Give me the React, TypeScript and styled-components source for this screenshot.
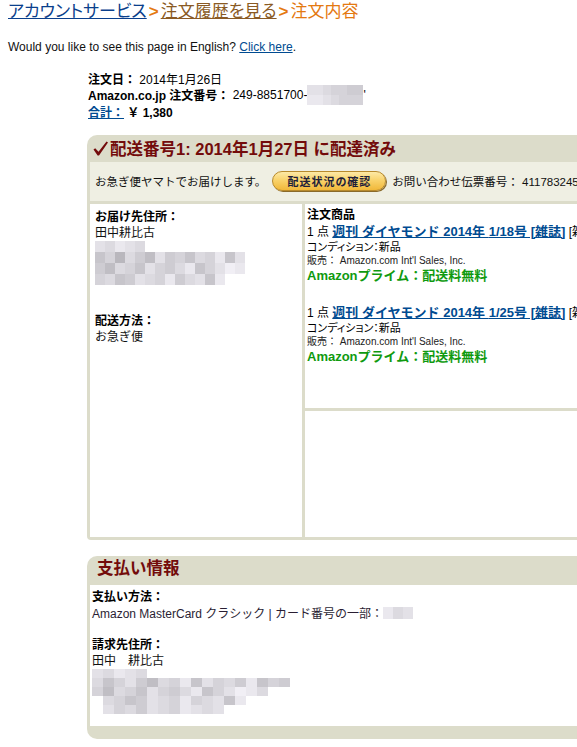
import React from "react";
import styled, { createGlobalStyle } from "styled-components";

const FONT = `"Liberation Sans", Arial, "Noto Sans CJK JP", sans-serif`;
const TAN = "#dcdcca";
const TAN_LIGHT = "#efefe3";
const MAROON = "#730b0b";
const LINK = "#004b91";

const GlobalStyle = createGlobalStyle`
  html, body { margin: 0; padding: 0; overflow: hidden; background: #fff; }
  body {
    font-family: ${FONT};
    font-size: 12px;
    color: #000;
  }
`;

const Page = styled.div`
  padding: 2px 8px 0;
  width: 760px;
`;

const Breadcrumb = styled.div`
  font-size: 17px;
  line-height: 20px;
  white-space: nowrap;
  font-feature-settings: "palt";
`;

const CrumbLink = styled.a<{ $tone: "blue" | "brown" }>`
  color: ${(p) => (p.$tone === "blue" ? "#0a3f8c" : "#8a5a24")};
  text-decoration: underline;
`;

const Sep = styled.span`
  color: #e47911;
  font-weight: bold;
  margin: 0 2px;
`;

const Current = styled.span`
  color: #e47911;
`;

const EnglishNote = styled.div`
  margin-top: 18px;
  line-height: 14px;
  color: #111;
`;

const TextLink = styled.a<{ $bold?: boolean; $size?: number }>`
  color: ${LINK};
  text-decoration: underline;
  font-weight: ${(p) => (p.$bold ? "bold" : "normal")};
  font-size: ${(p) => (p.$size ? `${p.$size}px` : "inherit")};
`;

const Summary = styled.div`
  margin: 16px 0 0 80px;
`;

const SummaryLine = styled.div`
  height: 16.5px;
  white-space: nowrap;
  display: flex;
  align-items: center;
`;

const Label = styled.b`
  font-weight: bold;
`;

const Box = styled.section`
  margin: 15px 0 0 79px;
  width: 680px;
  background: ${TAN};
  border-radius: 10px 0 0 4px;
  padding: 0 0 3px 3px;
`;

const BoxHeader = styled.h2`
  margin: 0;
  height: 27px;
  display: flex;
  align-items: center;
  gap: 1px;
  padding-left: 2px;
  color: ${MAROON};
  font-size: 16.5px;
  font-weight: bold;
  white-space: nowrap;
`;

const SubRow = styled.div`
  height: 39px;
  background: ${TAN_LIGHT};
  display: flex;
  align-items: center;
  padding-left: 5px;
  white-space: nowrap;
  color: #111;
  font-size: 11.5px;
`;

const TrackButton = styled.button`
  margin: 0 6px 0 6px;
  height: 20px;
  width: 114px;
  border-radius: 10px;
  border: 1px solid #b88a2c;
  box-shadow: 1px 1px 0 #8a6a2a;
  background: linear-gradient(#fde9a6 0%, #f9d36c 45%, #f1b83a 100%);
  font-family: ${FONT};
  font-feature-settings: "palt";
  font-size: 11px;
  font-weight: bold;
  color: #1f1f3a;
  letter-spacing: 1px;
  padding: 0;
  cursor: pointer;
`;

const ContentGrid = styled.div`
  margin-top: 3px;
  display: grid;
  grid-template-columns: 212px 1fr;
  grid-template-rows: 204px 126px;
  gap: 3px;
`;

const Cell = styled.div<{ $span?: boolean }>`
  background: #fff;
  grid-row: ${(p) => (p.$span ? "1 / span 2" : "auto")};
  padding: ${(p) => (p.$span ? "5px 5px" : "3px 2px")};
`;

const FieldLabel = styled.div<{ $gap?: number }>`
  font-weight: bold;
  line-height: 16px;
  margin-top: ${(p) => p.$gap ?? 0}px;
`;

const FieldText = styled.div`
  line-height: 16px;
  white-space: nowrap;
  color: #111;
`;

const Item = styled.div`
  & + & {
    margin-top: 19px;
  }
`;

const ItemLine = styled.div`
  line-height: 17px;
  height: 17px;
  white-space: nowrap;
`;

const Condition = styled.div`
  font-size: 11px;
  line-height: 15px;
  white-space: nowrap;
  font-feature-settings: "palt";
`;

const Seller = styled.div`
  font-size: 10px;
  line-height: 12px;
  white-space: nowrap;
  color: #222;
`;

const Prime = styled.div`
  font-size: 13px;
  line-height: 18px;
  font-weight: bold;
  color: #0f9a0f;
  white-space: nowrap;
`;

const PayBox = styled.section`
  margin: 16px 0 0 79px;
  width: 680px;
  background: ${TAN};
  border-radius: 10px 0 0 10px;
  padding: 0 0 13px 3px;
`;

const PayHeader = styled.h2`
  margin: 0;
  height: 29px;
  box-sizing: border-box;
  padding: 2px 0 0 7px;
  line-height: 20px;
  color: ${MAROON};
  font-size: 16.5px;
  font-weight: bold;
`;

const PayBody = styled.div`
  background: #fff;
  height: 141px;
  box-sizing: border-box;
  padding: 4px 2px;
`;

const CardText = styled.div`
  height: 16px;
  white-space: nowrap;
  color: #2a1e33;
  display: flex;
  align-items: center;
`;

const MosaicWrap = styled.div<{ $inline?: boolean }>`
  display: ${(p) => (p.$inline ? "inline-flex" : "flex")};
  flex-direction: column;
  vertical-align: middle;
`;

const MosaicRow = styled.div`
  display: flex;
`;

const MosaicCell = styled.span<{ $w: number; $h: number }>`
  display: block;
  width: ${(p) => p.$w}px;
  height: ${(p) => p.$h}px;
`;

function Mosaic({
  rows,
  w,
  h,
  inline,
}: {
  rows: string[];
  w: number;
  h: number;
  inline?: boolean;
}) {
  return (
    <MosaicWrap $inline={inline}>
      {rows.map((r, i) => (
        <MosaicRow key={i}>
          {r.split("").map((c, j) => {
            if (c === " ") return <MosaicCell key={j} $w={w} $h={h} />;
            const v = 0x88 + parseInt(c, 16) * 7;
            const tint = Math.min(255, v + 4);
            return (
              <MosaicCell
                key={j}
                $w={w}
                $h={h}
                style={{ background: `rgb(${v},${v - 2},${tint})` }}
              />
            );
          })}
        </MosaicRow>
      ))}
    </MosaicWrap>
  );
}

const Check = () => (
  <svg width="17" height="17" viewBox="0 0 17 17" aria-hidden="true">
    <path
      d="M1.5 9.5 L3.2 8.2 L6.5 11.8 L14.5 1.5 L16 2.5 L7 15.5 L5.6 15.5 Z"
      fill={MAROON}
    />
  </svg>
);

const items = [{ issue: "1/18号" }, { issue: "1/25号" }];

export default function App() {
  return (
    <>
      <GlobalStyle />
      <Page>
        <Breadcrumb>
          <CrumbLink $tone="blue" href="#">アカウントサービス</CrumbLink>
          <Sep>&gt;</Sep>
          <CrumbLink $tone="brown" href="#">注文履歴を見る</CrumbLink>
          <Sep>&gt;</Sep>
          <Current>注文内容</Current>
        </Breadcrumb>

        <EnglishNote>
          Would you like to see this page in English? <TextLink href="#">Click here</TextLink>.
        </EnglishNote>

        <Summary>
          <SummaryLine>
            <Label>注文日：</Label>&nbsp;2014年1月26日
          </SummaryLine>
          <SummaryLine>
            <Label>Amazon.co.jp 注文番号：</Label>&nbsp;249-8851700-
            <Mosaic inline w={8} h={10} rows={["ddcbbaa", "eedcbbb"]} />
            <span>'</span>
          </SummaryLine>
          <SummaryLine>
            <TextLink $bold href="#">合計：</TextLink>
            <Label>&nbsp;￥ 1,380</Label>
          </SummaryLine>
        </Summary>

        <Box>
          <BoxHeader>
            <Check />
            配送番号1: 2014年1月27日 に配達済み
          </BoxHeader>
          <SubRow>
            お急ぎ便ヤマトでお届けします。
            <TrackButton>配送状況の確認</TrackButton>
            お問い合わせ伝票番号：&nbsp;411783245461
          </SubRow>
          <ContentGrid>
            <Cell $span>
              <FieldLabel>お届け先住所：</FieldLabel>
              <FieldText>田中耕比古</FieldText>
              <Mosaic
                w={10}
                h={11}
                rows={[
                  "dcedc",
                  "9b7ca8dab9cbe9d",
                  "a8cb9dbace9bdfe",
                  "bc9adcbeacd9e",
                ]}
              />
              <FieldLabel $gap={28}>配送方法：</FieldLabel>
              <FieldText>お急ぎ便</FieldText>
            </Cell>
            <Cell>
              <FieldLabel>注文商品</FieldLabel>
              {items.map((it) => (
                <Item key={it.issue}>
                  <ItemLine>
                    1 点 <TextLink $bold $size={13} href="#">週刊 ダイヤモンド 2014年 {it.issue} [雑誌]</TextLink> [雑誌]
                  </ItemLine>
                  <Condition>コンディション：新品</Condition>
                  <Seller>販売： Amazon.com Int'l Sales, Inc.</Seller>
                  <Prime>Amazonプライム：配送料無料</Prime>
                </Item>
              ))}
            </Cell>
            <Cell />
          </ContentGrid>
        </Box>

        <PayBox>
          <PayHeader>支払い情報</PayHeader>
          <PayBody>
            <FieldLabel>支払い方法：</FieldLabel>
            <CardText>
              Amazon MasterCard クラシック | カード番号の一部：
              <Mosaic inline w={10} h={12} rows={["ecd"]} />
            </CardText>
            <FieldLabel $gap={16}>請求先住所：</FieldLabel>
            <FieldText>田中　耕比古</FieldText>
            <Mosaic
              w={11}
              h={9}
              rows={[
                "dcedc",
                "c9bda8cbe9dbcae9ba",
                "b8cb9dbace9bdfec",
                " cb9adcbebcd9e",
                " dbcadcbedcd",
              ]}
            />
          </PayBody>
        </PayBox>
      </Page>
    </>
  );
}
